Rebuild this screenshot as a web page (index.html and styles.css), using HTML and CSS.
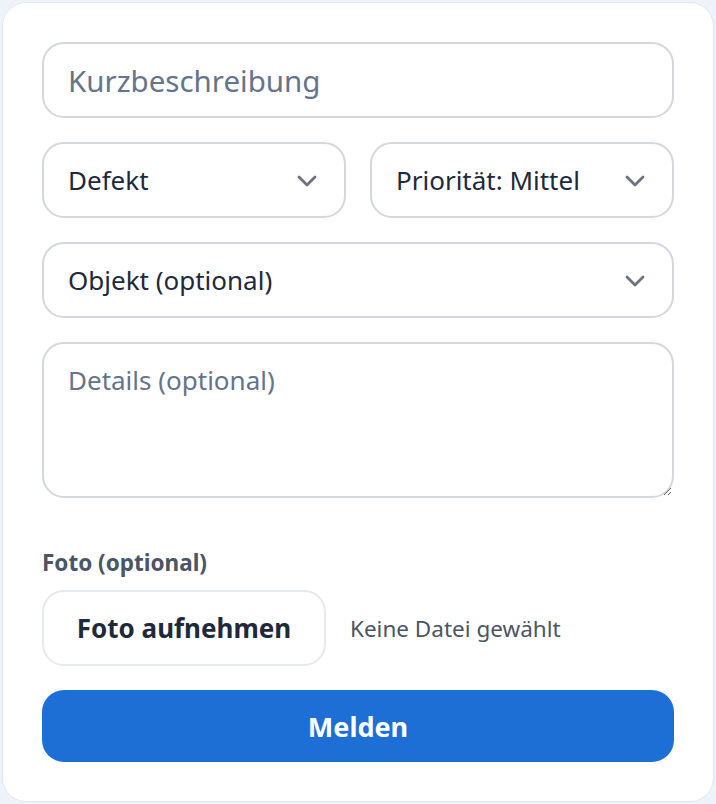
FILE: index.html
```html
<!DOCTYPE html>
<html lang="de">

<head>
    <meta charset="UTF-8">
    <meta name="viewport" content="width=device-width, initial-scale=1.0">
    <title>Meldung erfassen</title>
    <link rel="stylesheet" href="styles.css">
</head>

<body>
    <form class="report-card">
        <input type="text" class="field title-field" placeholder="Kurzbeschreibung">

        <div class="field-row">
            <div class="select-wrap">
                <select class="field select">
                    <option>Defekt</option>
                    <option>Reinigung</option>
                    <option>Sonstiges</option>
                </select>
                <svg class="chevron" viewBox="0 0 20 12"><path d="M2 2 L10 10 L18 2" /></svg>
            </div>
            <div class="select-wrap">
                <select class="field select">
                    <option>Priorität: Mittel</option>
                    <option>Priorität: Hoch</option>
                    <option>Priorität: Niedrig</option>
                </select>
                <svg class="chevron" viewBox="0 0 20 12"><path d="M2 2 L10 10 L18 2" /></svg>
            </div>
        </div>

        <div class="select-wrap">
            <select class="field select">
                <option>Objekt (optional)</option>
            </select>
            <svg class="chevron" viewBox="0 0 20 12"><path d="M2 2 L10 10 L18 2" /></svg>
        </div>

        <textarea class="field details" placeholder="Details (optional)"></textarea>

        <div class="photo-block">
            <div class="photo-label">Foto (optional)</div>
            <div class="photo-row">
                <label class="photo-button">
                    Foto aufnehmen
                    <input type="file" accept="image/*" capture="environment">
                </label>
                <span class="photo-status">Keine Datei gewählt</span>
            </div>
        </div>

        <button type="button" class="submit-button">Melden</button>
    </form>
</body>

</html>
```

FILE: styles.css
```css
body {
    margin: 0;
    padding: 2px;
    background-color: #eef3fa;
    font-family: "Noto Sans", "Open Sans", Arial, sans-serif;
}

.report-card {
    display: flex;
    flex-direction: column;
    gap: 24px;
    background-color: #fff;
    border: 1px solid #e2e8f0;
    border-radius: 24px;
    padding: 39px;
}

.field {
    box-sizing: border-box;
    width: 100%;
    height: 76px;
    padding: 0 24px;
    border: 2px solid #d4d7de;
    border-radius: 22px;
    background-color: #fff;
    font-family: inherit;
    font-size: 26px;
    color: #1e293b;
    outline: none;
}

.field::placeholder {
    color: #64748b;
}

.title-field {
    font-size: 29.5px;
}

.field-row {
    display: grid;
    grid-template-columns: 1fr 1fr;
    gap: 24px;
}

.select-wrap {
    position: relative;
}

.select {
    appearance: none;
    -webkit-appearance: none;
    padding-right: 60px;
}

.chevron {
    position: absolute;
    right: 29px;
    top: 33px;
    width: 20px;
    height: 12px;
    pointer-events: none;
    fill: none;
    stroke: #6b7280;
    stroke-width: 2.8;
    stroke-linecap: round;
    stroke-linejoin: round;
}

.details {
    height: 156px;
    padding: 18px 24px;
    resize: vertical;
    line-height: 36px;
}

.photo-block {
    display: flex;
    flex-direction: column;
    gap: 12px;
    margin-top: 26px;
}

.photo-label {
    font-size: 22.5px;
    line-height: 30px;
    font-weight: bold;
    color: #4b5563;
}

.photo-row {
    display: flex;
    align-items: center;
    gap: 24px;
}

.photo-button {
    box-sizing: border-box;
    display: flex;
    align-items: center;
    justify-content: center;
    width: 284px;
    height: 76px;
    border: 2px solid #e5e9f0;
    border-radius: 22px;
    font-size: 26px;
    font-weight: bold;
    color: #1e293b;
    cursor: pointer;
}

.photo-button input {
    display: none;
}

.photo-status {
    font-size: 22.5px;
    color: #4b5563;
}

.submit-button {
    height: 72px;
    border: none;
    border-radius: 22px;
    background-color: #1d6fd6;
    color: #fff;
    font-family: inherit;
    font-size: 27px;
    font-weight: bold;
    cursor: pointer;
}

.submit-button:hover {
    background-color: #185fb8;
}
```
